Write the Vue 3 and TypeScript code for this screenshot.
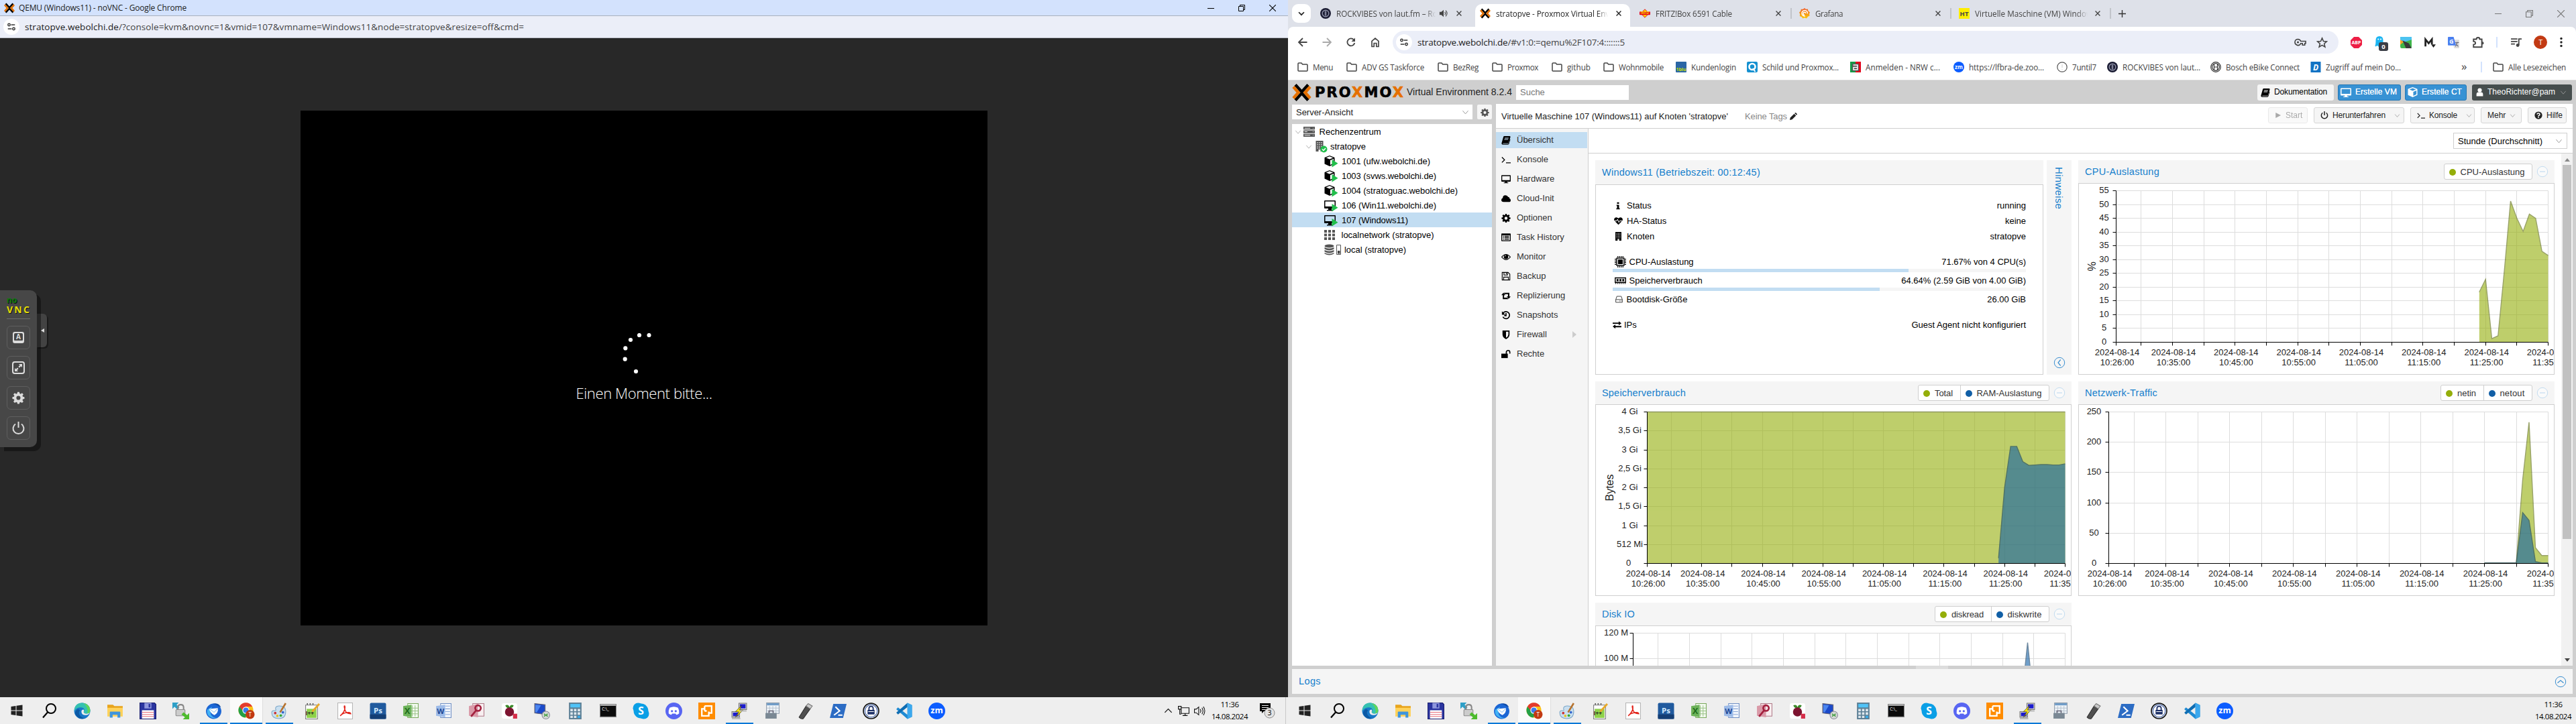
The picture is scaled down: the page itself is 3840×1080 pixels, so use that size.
<script setup lang="ts">
import { h, type FunctionalComponent } from 'vue'

// Spreads the letters of a label so that it fills the given width.
const vFit = {
  mounted(el: HTMLElement, binding: { value: number }) {
    if (!binding.value) return
    const length = (el.textContent ?? '').trim().length
    const natural = el.getBoundingClientRect().width
    el.style.letterSpacing = `${(binding.value - natural) / length}px`
  },
}

const PX = '<g fill="none" stroke-width="4.4"><path stroke="#000" d="M4.5 1.5 14 12l9.5-10.5M4.5 24.500 14 14l9.500 10.500"/><path stroke="#e57000" d="M1.500 4.500 9 13l-7.500 8.500M26.500 4.500 19 13l7.500 8.500"/></g>'
const MONITOR = '<path fill-rule="evenodd" d="M1 1.500h14q1 0 1 1v9q0 1-1 1H9.800v1.500h2V15H4.200v-1h2v-1.500H1q-1 0-1-1v-9q0-1 1-1zm.5 1.500v7h13V3z"/>'
const GEAR = '<path fill-rule="evenodd" d="M6.800 1h2.400l.4 2 1.300.5 1.700-1.200 1.700 1.700L13.100 5.700l.5 1.300 2 .4v2.400l-2 .4-.5 1.300 1.200 1.700-1.700 1.700-1.700-1.200-1.300.5-.4 2H6.800l-.4-2-1.300-.5-1.700 1.200-1.700-1.700 1.200-1.700L2.400 10.200l-2-.4V7.400l2-.4.500-1.300L1.700 4l1.700-1.700 1.700 1.200L6.400 3zM8 5.900a2.600 2.600 0 1 0 0 5.200 2.600 2.600 0 0 0 0-5.200z"/>'
const BUILDING = '<path fill-rule="evenodd" d="M2.500 0h11v16h-4v-3h-3v3h-4zM4.500 2v1.300h1.300V2zm2.800 0v1.300h1.300V2zm2.900 0v1.300h1.300V2zM4.500 4.700V6h1.300V4.700zm2.800 0V6h1.300V4.700zm2.900 0V6h1.300V4.700zM4.500 7.400v1.300h1.300V7.400zm2.800 0v1.300h1.300V7.400zm2.900 0v1.300h1.300V7.400zM4.500 10.100v1.300h1.300v-1.300zm2.800 0v1.300h1.300v-1.300zm2.900 0v1.300h1.300v-1.300z"/>'
const CUBE = '<path d="M8 0 15.500 3v9.500L8 16 .5 12.500V3z"/><path fill="#fff" d="M8 1.300 13.200 3.400 8 5.500 2.800 3.400zM9 7l5-2v6.600L9 14z"/>'
const PLAY = '<path fill="#21bf4b" d="M11.500 6 20.500 11.700 11.500 17.500z"/>'
const BOOK = '<path fill-rule="evenodd" d="M5 1h9.500q1.300.3 1 1.600L13 12q-.5 1.300-2 1.300H3.200q-1 .2-.6.900h9.200l2.600-8 1 .8L13 14.700q-.4.900-1.500.9H2.500Q0 15.300.6 12.500L3.600 2.200Q4 1 5 1zm1 3-.3 1h6.500l.3-1zm-.7 2.300L5 7.300h6.500l.3-1z"/>'
const HELP = '<circle cx="8" cy="8" r="7.500"/><path fill="none" stroke="#fff" stroke-width="2.200" d="M5.300 6.200Q5.600 4 8 4t2.600 2-2.500 3v1"/><circle cx="8" cy="12" r="1.200" fill="#fff"/>'

// [viewBox size, markup]
const art: Record<string, [string, string]> = {
  px: ['0 0 28 26', PX],
  siteinfo: ['0 0 16 16', '<g fill="none" stroke="#333" stroke-width="1.600"><circle cx="4" cy="4.500" r="2"/><path d="M7.500 4.500H14M2 11.500h6.500"/><circle cx="12" cy="11.500" r="2"/></g>'],
  down: ['0 0 16 16', '<path d="M3.500 6 8 10.500 12.500 6" fill="none" stroke="currentColor" stroke-width="2"/>'],
  chev: ['0 0 16 16', '<path d="M2 4.500 8 11.500 14 4.500" fill="none" stroke="currentColor" stroke-width="1.400"/>'],
  close: ['0 0 16 16', '<path d="M2.500 2.500l11 11M13.500 2.500l-11 11" fill="none" stroke="currentColor" stroke-width="2.200"/>'],
  wmin: ['0 0 10 10', '<path d="M0 5.500h10" stroke="currentColor"/>'],
  wmax: ['0 0 10 10', '<path d="M.5 2.500h7v7h-7zM2.500 2.500v-2h7v7h-2" fill="none" stroke="currentColor"/>'],
  wclose: ['0 0 10 10', '<path d="M0 0l10 10M10 0 0 10" fill="none" stroke="currentColor" stroke-width="1.100"/>'],
  plus: ['0 0 12 12', '<path d="M6 0v12M0 6h12" stroke="#333" stroke-width="1.500"/>'],
  speaker: ['0 0 16 16', '<path fill="#444" d="M1 5.500h3L8 2v12L4 10.500H1z"/><path fill="none" stroke="#444" stroke-width="1.300" d="M10 5.500q2 2.500 0 5M11.500 3q4.500 5 0 10"/>'],
  rock: ['0 0 16 16', '<circle cx="8" cy="8" r="8" fill="#1b1c33"/><circle cx="8" cy="8" r="4.800" fill="none" stroke="#8f93a8" stroke-width="1.400"/><path d="M8 4.500v7" stroke="#7d8096" stroke-width="2.500"/>'],
  fritz: ['0 0 18 16', '<path fill="#ffd800" stroke="#e3001b" d="M9 1 16 8 9 15 2 8z"/><rect x="0" y="5" width="18" height="5.500" rx="1" fill="#e3001b"/><text x="9" y="9.600" font-size="5" font-weight="700" text-anchor="middle" fill="#ffe000">FRITZ!</text>'],
  grafana: ['0 0 16 16', '<defs><linearGradient id="gf" x1="0" y1="0" x2="0" y2="1"><stop offset="0" stop-color="#f05a28"/><stop offset="1" stop-color="#fbca0a"/></linearGradient></defs><path fill="url(#gf)" d="M8 0l2 1.800 2.800-.3.700 2.700L16 6.500l-1 2.500.6 2.500-2.600 1.200L11 15.500l-3-1-2.700 1-1.500-2.300L.8 12 1.200 9 0 6.500l2.200-2 .6-2.800 3 .1z"/><path fill="none" stroke="#fff" stroke-width="1.400" d="M12.500 8.300A4.300 4.300 0 1 0 9 12M10 8a2 2 0 1 0-2 2.200"/>'],
  ht: ['0 0 16 16', '<path fill="#ffee00" d="M0 0h16v16H0z"/><text x="8" y="11.500" font-size="9.500" font-weight="700" text-anchor="middle">HT</text>'],
  back: ['0 0 16 16', '<path d="M14.500 8H2.500M8 2 2 8l6 6" fill="none" stroke="currentColor" stroke-width="1.800"/>'],
  fwd: ['0 0 16 16', '<path d="M1.500 8h12M8 2l6 6-6 6" fill="none" stroke="currentColor" stroke-width="1.800"/>'],
  reload: ['0 0 16 16', '<path d="M13.300 9A5.500 5.500 0 1 1 12 4.200" fill="none" stroke="#444" stroke-width="1.800"/><path fill="#444" d="M14 1.500V7H8.500z"/>'],
  home: ['0 0 16 16', '<path d="M3 14.500V6.300l5-4.200 5 4.200v8.200H9.800V9.500H6.200v5z" fill="none" stroke="#444" stroke-width="1.700"/>'],
  key: ['0 0 18 16', '<path d="M5.500 3.500a4.500 4.500 0 1 0 4.200 6.200h2.500v2.500h3.500V9.700H17V6.500H9.700A4.500 4.500 0 0 0 5.500 3.500z" fill="none" stroke="#444" stroke-width="1.600"/><circle cx="5.500" cy="8" r="1.600" fill="#444"/>'],
  star: ['0 0 16 16', '<path d="M8 1.800l1.900 4.300 4.600.4-3.500 3.100 1.100 4.600L8 11.700l-4.100 2.500L5 9.600 1.500 6.500l4.600-.4z" fill="none" stroke="#444" stroke-width="1.500"/>'],
  abp: ['0 0 16 16', '<path fill="#ed1e45" d="M4.700 0h6.600L16 4.700v6.600L11.300 16H4.700L0 11.300V4.700z"/><text x="8" y="10.600" font-size="6.600" font-weight="700" fill="#fff" text-anchor="middle">ABP</text>'],
  ghost: ['0 0 20 22', '<path fill="#1cb5f2" d="M7 0q5.500 0 5.500 6v5q2 1 0 2l-1.500-.5V15L8 14l-2 2-2-2-3 1.500q-1-1 0-3Q1.500 11 1.500 6 1.500 0 7 0z"/><circle cx="5.300" cy="4.500" r="1.100" fill="#fff"/><circle cx="9" cy="4.500" r="1.100" fill="#fff"/><rect x="6" y="9" width="14" height="13" rx="3" fill="#3a3d46"/><text x="13" y="19" font-size="9.500" font-weight="700" fill="#fff" text-anchor="middle">0</text>'],
  route: ['0 0 16 16', '<rect width="16" height="16" rx="2" fill="#3fb54a"/><path fill="#4cc3f0" d="M0 0h16v4L0 9z"/><path fill="#f6a623" d="M0 4 5 7 0 11z"/><path fill="#3a3a3a" d="M3 5 12 9 16 16H8L5 9z"/>'],
  mdl: ['0 0 16 16', '<path d="M1.500 13.500V3.500L6 9l4.500-5.500v7" fill="none" stroke="#222" stroke-width="2.600"/><path fill="#222" d="M9.500 10.500H16L12.700 15z"/>'],
  translate: ['0 0 16 16', '<path fill="#dcdcdc" d="M5 4h10q1 0 1 1v10q0 1-1 1H9z"/><path fill="#4a80f0" d="M1 0h7l3.500 12H1q-1 0-1-1V1q0-1 1-1z"/><text x="5" y="9" font-size="8" font-weight="700" fill="#fff" text-anchor="middle">G</text><path d="M10.500 8h5M13 7v1.500q-.5 3-2.500 5M11.500 9.500l3 4" stroke="#667" fill="none"/>'],
  puzzle: ['0 0 16 16', '<path d="M2 4h3.800a2.200 2.200 0 0 1 4.400 0H13v10.500H2V11q2.500 0 2.500-2T2 7z" fill="none" stroke="#444" stroke-width="1.700"/><path d="M13.500 7a2 2 0 0 1 0 4z" fill="#444"/>'],
  playlist: ['0 0 16 16', '<path d="M1 3h9M1 6.500h9M1 10h5.500M12 11.500V3h4" fill="none" stroke="#444" stroke-width="1.700"/><circle cx="10.500" cy="11.800" r="2.300" fill="#444"/>'],
  dots: ['0 0 4 16', '<circle cx="2" cy="2.500" r="1.700"/><circle cx="2" cy="8" r="1.700"/><circle cx="2" cy="13.500" r="1.700"/>'],
  folder: ['0 0 16 16', '<path d="M1 3q0-1 1-1h4l1.700 2H14q1 0 1 1v8q0 1-1 1H2q-1 0-1-1z" fill="none" stroke="#444" stroke-width="1.500"/>'],
  blu: ['0 0 16 16', '<rect width="16" height="16" rx="1" fill="#2b66a5"/><text x="8" y="14" font-size="7" font-weight="700" fill="#c8e000" text-anchor="middle">1blu</text>'],
  schild: ['0 0 16 16', '<rect width="16" height="16" rx="2" fill="#1590d0"/><circle cx="8" cy="7.500" r="4.500" fill="none" stroke="#fff" stroke-width="2.600"/><path d="M9 10l3.500 5" stroke="#fff" stroke-width="2"/>'],
  nrw: ['0 0 16 16', '<path fill="#159a48" d="M0 0h8v16H0z"/><path fill="#e2001a" d="M8 0h8v16H8z"/><rect x="3" y="3" width="10" height="11" fill="#555"/><path d="M4.500 5H11v3.500H5V12h6.500M11 8.500V12" stroke="#fff" fill="none" stroke-width="1.500"/>'],
  zoom: ['0 0 16 16', '<circle cx="8" cy="8" r="8" fill="#0b5cff"/><text x="8" y="10.600" font-size="8" font-weight="700" fill="#fff" text-anchor="middle">zm</text>'],
  seven: ['0 0 16 16', '<circle cx="8" cy="8" r="7.200" fill="#fff" stroke="#555" stroke-width="1.200"/><path d="M8 4v5M8 11v1" stroke="#ccc"/>'],
  bosch: ['0 0 16 16', '<g fill="none" stroke="#333" stroke-width="1.200"><circle cx="8" cy="8" r="7.300"/><circle cx="8" cy="8" r="5.300"/><path d="M5.500 3.500v9M10.500 3.500v9M5.500 8h5"/></g>'],
  dg: ['0 0 16 16', '<rect x=".5" width="15" height="16" fill="#1273c4"/><text x="8" y="12.500" font-size="12" font-style="italic" font-weight="700" fill="#fff" text-anchor="middle">D</text>'],
  book: ['0 0 16 16', BOOK],
  monitor: ['0 0 16 16', MONITOR],
  gear: ['0 0 16 16', GEAR],
  cube: ['0 0 16 16', '<path fill-rule="evenodd" d="M8 0 15.500 3v9.500L8 16 .5 12.500V3zM8 1.600 2.800 3.700 8 5.800l5.200-2.100zM9 7.500v6.300l5-2.300V5.300z"/>'],
  user: ['0 0 16 16', '<circle cx="8" cy="4.300" r="3.800"/><path d="M2 15.500V12q0-4 4-4h4q4 0 4 4v3.500z"/>'],
  dc: ['0 0 16 16', '<path fill="#555" d="M0 1h16v4H0zM0 6h16v4H0zM0 11h16v4H0z"/><path fill="#eee" d="M1.500 2.500h8v1h-8zM1.500 7.500h4v1h-4zM1.500 12.500h8v1h-8z"/><path fill="#bbb" d="M13 2.500h1.500v1H13zM13 7.500h1.500v1H13zM13 12.500h1.500v1H13z"/>'],
  node: ['0 0 21 18', `<g fill="#555">${BUILDING}</g><circle cx="14.500" cy="12.500" r="5" fill="#21bf4b"/><path d="M12 12.500l2 2 3-3.500" fill="none" stroke="#fff" stroke-width="1.500"/>`],
  ct: ['0 0 21 18', CUBE + PLAY],
  vm: ['0 0 21 18', '<path fill-rule="evenodd" d="M1 1h15q1 0 1 1v10q0 1-1 1h-5v2h2v1.500H4V15h2v-2H1q-1 0-1-1V2q0-1 1-1zm.5 1.500V10h14V2.500z"/>' + PLAY],
  sdn: ['0 0 21 18', '<path fill="#555" d="M0 1h4v4H0zM6 1h4v4H6zM12 1h4v4h-4zM0 6.500h4v4H0zM6 6.500h4v4H6zM12 6.500h4v4h-4zM0 12h4v4H0zM6 12h4v4H6zM12 12h4v4h-4z"/>'],
  storage: ['0 0 26 18', '<g fill="#555"><ellipse cx="7.500" cy="3" rx="7" ry="2.500"/><path d="M.5 5q7 3.500 14 0v2.500q-7 4-14 0zM.5 9q7 3.500 14 0v2.500q-7 4-14 0zM.5 13q7 3.500 14 0v1.500q-7 4-14 0z"/></g><path d="M18.500 1.500h6v14h-6z" fill="#fff" stroke="#555"/><path fill="#444" d="M20 10h3.500v4.500H20z"/>'],
  term: ['0 0 16 16', '<path d="M1 4l4.500 4.500L1 13M8 13.500h8" fill="none" stroke="currentColor" stroke-width="1.500"/>'],
  cloud: ['0 0 16 16', '<path d="M4 14q-4 0-4-3.500Q0 8 2.500 7 2.500 2.500 7 2.500q3.500 0 4.500 3 2.500 0 2.500 2.500 2 .8 2 3Q16 14 13 14z"/>'],
  list: ['0 0 16 16', '<path fill-rule="evenodd" d="M1 1.500h14q1 0 1 1v11q0 1-1 1H1q-1 0-1-1v-11q0-1 1-1zM1.500 4.500v8.500h13V4.500z"/><path d="M3 5.500h1.500V7H3zm2.500 0H13V7H5.500zM3 8h1.500v1.500H3zm2.500 0H13v1.500H5.500zM3 10.500h1.500V12H3zm2.500 0H13V12H5.500z"/>'],
  eye: ['0 0 16 16', '<path d="M.7 8.500Q8-.5 15.300 8.500 8 17.500.7 8.500z" fill="none" stroke="currentColor" stroke-width="1.300"/><circle cx="8" cy="8" r="3.800"/><path d="M6 7.500q.3-1.700 2-2" fill="none" stroke="#fff" stroke-width=".9"/>'],
  floppy: ['0 0 16 16', '<path d="M1.500 1.500h10l3 3v10h-13zM4.500 1.500v4.500h6V1.500M8.500 2.500v2M4 14.500V9.500h8v5" fill="none" stroke="currentColor" stroke-width="1.300"/>'],
  retweet: ['0 0 16 16', '<path d="M0 7 3.500 3 7 7H4.700v4.500H10L12 14H2.500V7zM16 9.500l-3.500 4-3.500-4h2.300V5.300H6L4 3h9.700v6.500z"/>'],
  history: ['0 0 16 16', '<path d="M3 4.800a6 6 0 1 1-.3 6.200M8 4.500v4.500H5" fill="none" stroke="currentColor" stroke-width="1.900"/><path d="M1 1.500v6h6z"/>'],
  shield: ['0 0 16 16', '<path fill-rule="evenodd" d="M2 1h12v7q0 5-6 8-6-3-6-8zm6 2v10.500q4-2.500 4-5.500V3z"/>'],
  unlock: ['0 0 16 16', '<path d="M0 7.500h11V15H0z"/><path d="M8.500 8V5a3 3 0 0 1 6 0v2.500" fill="none" stroke="currentColor" stroke-width="1.900"/>'],
  info: ['0 0 16 16', '<path d="M6 1h4v3H6zM5 6h5v7h1.500v2h-7v-2H6V8H5z"/>'],
  heart: ['0 0 16 16', '<path d="M8 15 1 8Q-1 5 1.500 2.500 5 0 8 3.500q3-3.500 6.500-1Q17 5 15 8z"/><path d="M1 8h4l1.500-3L9 11l1.300-3H15" fill="none" stroke="#fff" stroke-width="1.200"/>'],
  building: ['0 0 16 16', BUILDING],
  cpu: ['0 0 18 18', '<path d="M2.500 2.500h13v13h-13z"/><path d="M4 4h10v10H4z" fill="#fff"/><path d="M5.300 5.300h7.400v7.400H5.300z"/><path d="M5 0v2.500M7.700 0v2.500M10.300 0v2.500M13 0v2.500M5 15.500V18M7.700 15.500V18M10.300 15.500V18M13 15.500V18M0 5h2.500M0 7.700h2.500M0 10.300h2.500M0 13h2.500M15.500 5H18M15.500 7.700H18M15.500 10.300H18M15.500 13H18" stroke="#000" stroke-width="1.300"/>'],
  ram: ['0 0 18 16', '<path fill-rule="evenodd" d="M0 3h18v9H0zm1.500 1.500V10h15V4.500z"/><path d="M3 5.500h3v3.500H3zm4.500 0h3v3.500h-3zm4.500 0h3v3.500h-3z"/><path d="M1.500 12v1.500M4.500 12v1.500M7.500 12v1.500M10.500 12v1.500M13.500 12v1.500M16.500 12v1.500" stroke="#000"/>'],
  hdd: ['0 0 16 16', '<path d="M2 8.500 4 2.500h8l2 6v5H2zM2 8.500h12M8.500 11h1.300M11 11h1.300" fill="none" stroke="#444" stroke-width="1.200"/>'],
  exchange: ['0 0 16 16', '<path d="M0 4h11V1.500L16 5.200 11 9V6.300H0zM16 12.500H5V15L0 11.200 5 7.500v2.700h11z"/>'],
  pencil: ['0 0 16 16', '<path d="M0 16l1-5L9.500 2.500l4 4L5 15zM10.500 1.500 12 0q1 0 2.500 1.500T16 4l-1.500 1.500z"/>'],
  play: ['0 0 16 16', '<path d="M2 1.500 14.500 8 2 14.500z"/>'],
  power: ['0 0 16 16', '<path d="M4.500 3A6.200 6.200 0 1 0 11.500 3M8 0v8" fill="none" stroke="currentColor" stroke-width="2"/>'],
  help: ['0 0 16 16', HELP],
  ringMinus: ['0 0 18 18', '<circle cx="9" cy="9" r="7.700" fill="#fafafa" stroke="#c3dcf0"/><path d="M5 9h8" stroke="#c3dcf0" stroke-width="1.200"/>'],
  ringLeft: ['0 0 18 18', '<circle cx="9" cy="9" r="7.700" fill="none" stroke="#3b8fd0"/><path d="M10.700 4.500 7 9l3.700 4.500" fill="none" stroke="#3b8fd0" stroke-width="1.200"/>'],
  ringUp: ['0 0 18 18', '<circle cx="9" cy="9" r="7.700" fill="none" stroke="#3b8fd0"/><path d="M4.500 10.700 9 7l4.500 3.700" fill="none" stroke="#3b8fd0" stroke-width="1.200"/>'],
  // noVNC control bar
  nKeys: ['0 0 25 25', '<path fill-rule="evenodd" d="M7 4h11q3 0 3 3v11q0 3-3 3H7q-3 0-3-3V7q0-3 3-3zm1 2q-2 0-2 2v8q0 1 1 1h11q1 0 1-1V8q0-2-2-2z"/><text x="12.500" y="15.300" font-size="10" font-weight="700" text-anchor="middle">A</text>'],
  nFull: ['0 0 25 25', '<rect x="4" y="4" width="17" height="17" rx="3" fill="none" stroke="currentColor" stroke-width="2"/><path d="M13 7H18v5l-1.700-1.700-2.300 2.300-1.600-1.600 2.300-2.300zM12 18H7v-5l1.700 1.700 2.300-2.300 1.600 1.600-2.300 2.300z"/>'],
  nGear: ['0 0 25 25', `<g transform="translate(3 2.500) scale(1.180)">${GEAR}</g>`],
  nPower: ['0 0 25 25', '<path d="M8 6.500A8 8 0 1 0 17 6.500M12.500 3v9" fill="none" stroke="currentColor" stroke-width="2"/>'],
  // Taskbar
  start: ['0 0 24 24', '<path d="M3.500 6 10.500 5v6.500h-7zM11.500 4.800 20.500 3.500v8h-9zM3.500 12.500h7V19l-7-1zM11.500 12.500h9v8l-9-1.300z"/>'],
  search: ['0 0 24 24', '<circle cx="14" cy="9" r="7" fill="none" stroke="#000" stroke-width="2"/><path d="M9 14.500 2 22.500" stroke="#000" stroke-width="2.200"/>'],
  edge: ['0 0 24 24', '<circle cx="12" cy="12" r="11.500" fill="#1878c8"/><path fill="#35c1b1" d="M.8 10Q2 .5 12 .5T23.500 11q0 5-5.500 5-4 0-4-2.500 2-1.500 1-4T10 7Q4 7 .8 12z"/><path fill="#5fd65a" d="M14 1q9 2 9.400 10 0 4-4 5 2-9-5.400-15z"/><path fill="#0c59a4" d="M9 11q-3 3-.5 7t7.500 4.500Q9 25 4 19.500T6 9z"/><path fill="#eee" d="M14 13.500q.5 2.500 4 2.500t5-1.500q-1.500 3.500-6 3.500-5.500 0-6-4t3-4q1.500 1.500 0 3.500z"/>'],
  explorer: ['0 0 24 24', '<path fill="#e8a41c" d="M1 3h8l2 2h12v4H1z"/><path fill="#ffd25a" d="M1 7.500h22V20H1z"/><path fill="#3f95dc" d="M4.500 21.500V14q0-1 1-1h13q1 0 1 1v7.500h-4v-4h-7v4z"/>'],
  save: ['0 0 24 24', '<path fill="#2b35a0" stroke="#1a2070" d="M.5 .5h21l2 2v21H.5z"/><path fill="#8f97dd" d="M7 .5h10v8H7z"/><path fill="#2b35a0" d="M13 2h2.500v5H13z"/><path fill="#fff" d="M3.500 11h17v12h-17z"/><path d="M3.500 14h17M3.500 17h17M3.500 20h17" stroke="#e56c7a"/>'],
  winscp: ['0 0 24 24', '<path fill="#2d9fc7" d="M0 0h9L6 3l4 4-3 3-4-4-3 3z"/><path fill="none" stroke="#888" stroke-width="2" d="M8 11V7q0-4 4-4t4 4v4"/><rect x="5" y="10" width="13" height="9" rx="1" fill="#ccc" stroke="#888"/><path fill="#4dbb2d" d="M24 24h-9l3-3-5-4 3-3 5 4 3-3z"/>'],
  tbird: ['0 0 24 24', '<circle cx="12" cy="12.500" r="11" fill="#1c66d4"/><path fill="#42b2f5" d="M3 10Q1 16 6 20t12 2q-8 0-10-5t2-11z"/><path fill="#fff" d="M5.500 9 18 8q1 7-5 10-6-3-7.500-9z"/><path d="M6 9l6.500 5L18 8.500" fill="none" stroke="#9cc8f0"/><path fill="#0d4aa8" d="M10 2q9-3 12.500 5l-4-2q-5-3-8.500-3z"/>'],
  chrome: ['0 0 26 26', '<circle cx="12" cy="12" r="11.500" fill="#fbc116"/><path fill="#e33b2e" d="M2 6.200a11.500 11.500 0 0 1 20 0H12L7.500 14z"/><path fill="#23a047" d="M2 6.200a11.500 11.500 0 0 0 9 17.200L16 15h-7z"/><circle cx="12" cy="12" r="5.400" fill="#fff"/><circle cx="12" cy="12" r="4.200" fill="#3b7ded"/><circle cx="18.500" cy="18.500" r="7" fill="#c23a13"/><text x="18.500" y="21.500" font-size="8.500" fill="#fff" text-anchor="middle">T</text>'],
  paint: ['0 0 24 24', '<path fill="#c9dff0" stroke="#7ca7c8" d="M10 5q11-1 11 8 0 10-10 10Q1 23 1 14.500q0-3 3-3t3-1Q5 6 10 5z"/><circle cx="6" cy="15" r="1.800" fill="#c33"/><circle cx="9" cy="19" r="1.800" fill="#e9c21d"/><circle cx="14" cy="18.500" r="1.800" fill="#3a3"/><circle cx="17" cy="14" r="1.800" fill="#36c"/><path d="M21 1 13 14" stroke="#b5722e" stroke-width="2.500"/>'],
  npp: ['0 0 24 24', '<path fill="#fff" stroke="#777" d="M2.500 3.500h17v20h-17z"/><path fill="#8fd14a" d="M4 9h14v13H4z"/><path d="M5 3V1M9 3V1M13 3V1" stroke="#555" stroke-width="1.500"/><text x="8.500" y="18" font-size="8" font-weight="700" text-anchor="middle">I++</text><path d="M22 2 12 13" stroke="#e8a92a" stroke-width="2.800"/>'],
  pdf: ['0 0 24 24', '<path fill="#fff" stroke="#b5b5b5" d="M1.500 .5h21v23h-21z"/><path fill="none" stroke="#e2231a" stroke-width="1.500" d="M5 19Q13 12 11.500 5q-1.500-1 0 5t8.500 6q0-2.500-6-1.500T5 19z"/>'],
  ps: ['0 0 24 24', '<rect x=".5" y=".5" width="23" height="23" rx="2" fill="#205a9e"/><path fill="#143e74" d="M.5 17h23v6.500H.5z"/><text x="12" y="15" font-size="11" font-weight="700" fill="#d4ecff" text-anchor="middle">Ps</text>'],
  excel: ['0 0 24 24', '<path fill="#f3faf0" stroke="#78a85a" d="M7.500 1.500h15v20h-15z"/><path d="M14 4v16M18 4v16M12 8h10M12 12h10M12 16h10" stroke="#9bc388"/><path fill="#6db35a" d="M1 5 13 3v18L1 19z"/><text x="7" y="16.500" font-size="12" font-weight="700" fill="#1f6b1c" text-anchor="middle">X</text>'],
  word: ['0 0 24 24', '<path fill="#f2f6fc" stroke="#6f8fc4" d="M7.500 1.500h15v20h-15z"/><path d="M14 5h7M14 9h7M14 13h7M14 17h7" stroke="#8aa7d6"/><path fill="#9dbbe8" d="M1 5 14 3v18L1 19z"/><text x="7.500" y="16.500" font-size="11" font-weight="700" fill="#1d4795" text-anchor="middle">W</text>'],
  access: ['0 0 24 24', '<path fill="#f8eef0" stroke="#b07a88" d="M6.500 1.500h16v18h-16z"/><path fill="#d99aa8" d="M1 5 14 2v19L1 19z"/><circle cx="14" cy="8" r="4" fill="none" stroke="#a3213f" stroke-width="2.600"/><path d="M11.500 11 4 20" stroke="#a3213f" stroke-width="2.600"/>'],
  raspi: ['0 0 24 24', '<rect x="1" y="1" width="22" height="22" rx="3" fill="#fff"/><path fill="#3b8a2a" d="M6 4q5-2 6 3 1-5 6-3-1 4-6 4T6 4z"/><circle cx="12" cy="13.500" r="6.500" fill="#7d1330"/><path fill="#d52d49" d="M17 16h6v7h-6z"/>'],
  rdp: ['0 0 24 24', '<path fill="#1b49c9" stroke="#667" d="M1 1.500 16 3v14L1 15z"/><path fill="#4c86f0" d="M2 3l8 1-6 10H2z"/><circle cx="17" cy="18" r="5.500" fill="#d5d9d5" stroke="#889"/><path d="M14.500 16l2 2-2 2M19.500 16l-2 2 2 2" fill="none" stroke="#3a9a3a" stroke-width="1.400"/>'],
  calc: ['0 0 24 24', '<path fill="#5d8096" d="M3 0h18v24H3z"/><path fill="#4fc3f7" d="M5 2h14v5H5z"/><path fill="#dfe8ee" d="M5 9h3.500v3.500H5zM10.200 9h3.500v3.500h-3.500zM15.500 9H19v3.500h-3.500zM5 14h3.500v3.500H5zM10.200 14h3.500v3.500h-3.500zM15.500 14H19v3.500h-3.500zM5 19h3.500v3H5zM10.200 19h3.500v3h-3.500z"/><path fill="#37b0f0" d="M15.500 19H19v3h-3.500z"/>'],
  cmd: ['0 0 24 24', '<path fill="#0b0b0b" stroke="#888" d="M.5 2.500h23v18H.5z"/><path fill="#ddd" d="M1 3h22v1.500H1z"/><text x="3" y="11.500" font-size="6" fill="#fff">C:\\_</text>'],
  skype: ['0 0 24 24', '<circle cx="8" cy="8" r="7.500" fill="#0a9fe6"/><circle cx="16" cy="16" r="7.500" fill="#0a9fe6"/><circle cx="12" cy="12" r="10.500" fill="#0a9fe6"/><text x="12" y="17.500" font-size="15" font-weight="700" fill="#fff" text-anchor="middle">S</text>'],
  discord: ['0 0 24 24', '<circle cx="12" cy="12" r="12" fill="#5865f2"/><path fill="#fff" d="M6 7.500q3-1.500 6-1.500t6 1.500q2 4 1.500 8-2 2-4 2l-1-1.700H9.500l-1 1.700q-2 0-4-2Q4 11.500 6 7.500z"/><circle cx="9.300" cy="12.300" r="1.600" fill="#5865f2"/><circle cx="14.700" cy="12.300" r="1.600" fill="#5865f2"/>'],
  vmware: ['0 0 24 24', '<path fill="#ff8c00" d="M0 0h24v24H0z"/><path d="M9 5h10v10h-4M15 13v6H5V9h4v3M9 9V5M9 12h3" fill="none" stroke="#fff" stroke-width="2.200"/>'],
  putty: ['0 0 24 24', '<path fill="#cfcfcf" stroke="#777" d="M11 1h11v9H11zM1 13h11v8H1z"/><path fill="#1b1bd0" d="M12.500 2.500h8v6h-8zM2.500 14.500h8v5h-8z"/><path fill="#ffe800" stroke="#333" stroke-width=".7" d="M15 4 6 13l5 .5L6 21l11-10-5-.5z"/><path fill="#bbb" d="M12 11h10v2H12zM1 21.500h12V24H1z"/>'],
  tools: ['0 0 24 24', '<path fill="#eef3f8" stroke="#8a98a8" d="M3.500 .5h18v15h-18z"/><path fill="#6f9cc8" d="M4 1h17v3H4z"/><path d="M8 5v10M12.500 5v10M17 5v10M4 8h17M4 12h17" stroke="#b8c4d0"/><path fill="#7a8894" d="M2 15h16v8H2z"/><path fill="none" stroke="#667" stroke-width="1.500" d="M7 15v-3h6v3"/>'],
  usb: ['0 0 24 24', '<path fill="#4f4f4f" stroke="#2f2f2f" d="M13 5 19 9 9 23q-3 1-6-2z"/><path fill="#c9c9c9" stroke="#777" d="M16 1.500 22 5l-3 4-6-4z"/>'],
  pshell: ['0 0 24 24', '<path fill="#2c6cc4" d="M5 2h19l-5 20H0z"/><path d="M8 6l6 6-8 6M12 18h6" fill="none" stroke="#fff" stroke-width="2"/>'],
  keepass: ['0 0 24 24', '<circle cx="12" cy="12" r="11" fill="#dfe6f2" stroke="#111" stroke-width="1.600"/><circle cx="12" cy="12" r="8.800" fill="#fff" stroke="#3b5aa0"/><path d="M9 11V8.500a3 3 0 0 1 6 0V11" fill="none" stroke="#1c2f66" stroke-width="1.700"/><path fill="#1c2f66" d="M7 10.500h10V17H7z"/><path d="M8 13h8" stroke="#fff"/>'],
  vscode: ['0 0 24 24', '<path fill="#1f8ad2" d="M17 .5 23.500 3.500v17L17 23.500 1 9.500 3.500 7 17 17.500z"/><path fill="#0e6db3" d="M17 .5v6L3.500 17 1 14.500z"/><path fill="#3ba8ee" d="M17 .5 23.500 3.500v17L17 23.500z"/>'],
  zoomBig: ['0 0 24 24', '<circle cx="12" cy="12" r="12" fill="#0b5cff"/><text x="12" y="15.800" font-size="12" font-weight="700" fill="#fff" text-anchor="middle">zm</text>'],
  caret: ['0 0 16 16', '<path d="M2.500 10.500 8 5l5.500 5.500" fill="none" stroke="#111" stroke-width="1.300"/>'],
  net: ['0 0 16 16', '<path d="M4.500 3.500h11v8h-11zM10 11.500v3M6.500 14.500h7M.5 1.500h4v4h-4zM2.500 5.500v7h2" fill="none" stroke="#111" stroke-width="1.100"/>'],
  vol: ['0 0 16 16', '<path d="M.5 5.500h2.500L6.500 2.500v11L3 10.500H.5zM8.500 5.500q2 2.500 0 5M11 3.500q3 4.500 0 9M13 2q4 6 0 12" fill="none" stroke="#111"/>'],
  notif: ['0 0 26 26', '<path d="M2 2h16v12H8l-3 3v-3H2z"/><path d="M5 5.500h10M5 8.500h10M5 11.500h6" stroke="#eee" stroke-width="1.200"/><circle cx="16.500" cy="16.500" r="7.500" fill="#e3e3e3" stroke="#888"/><text x="16.500" y="20.300" font-size="10.500" text-anchor="middle">3</text>'],
}

const Ico: FunctionalComponent<{ n: string; w?: number; hgt?: number }> = (props) => {
  const [box, markup] = art[props.n]
  return h('svg', {
    viewBox: box,
    width: props.w ?? 16,
    height: props.hgt ?? props.w ?? 16,
    fill: 'currentColor',
    style: { flex: 'none', display: 'block' },
    innerHTML: markup,
  })
}
Ico.props = ['n', 'w', 'hgt']

const tabs = [
  { icon: 'rock', text: 'ROCKVIBES von laut.fm – Roc', max: 148, fit: 156, audio: true },
  { icon: 'px', text: 'stratopve - Proxmox Virtual Envi', max: 167, fit: 172, active: true },
  { icon: 'fritz', text: 'FRITZ!Box 6591 Cable', max: 170, fit: 114, sep: true },
  { icon: 'grafana', text: 'Grafana', max: 170, fit: 41, sep: true },
  { icon: 'ht', text: 'Virtuelle Maschine (VM) Window', max: 168, fit: 175, sep: true },
]

const bookmarks = [
  { icon: 'folder', text: 'Menu', fit: 30, at: 14 },
  { icon: 'folder', text: 'ADV GS Taskforce', fit: 93, at: 87 },
  { icon: 'folder', text: 'BezReg', fit: 38, at: 223 },
  { icon: 'folder', text: 'Proxmox', fit: 46, at: 304 },
  { icon: 'folder', text: 'github', fit: 35, at: 393 },
  { icon: 'folder', text: 'Wohnmobile', fit: 67, at: 470 },
  { icon: 'blu', text: 'Kundenlogin', fit: 67, at: 578 },
  { icon: 'schild', text: 'Schild und Proxmox...', fit: 114, at: 684 },
  { icon: 'nrw', text: 'Anmelden - NRW c...', fit: 111, at: 838 },
  { icon: 'zoom', text: 'https://lfbra-de.zoo...', fit: 112, at: 992 },
  { icon: 'seven', text: '7until7', fit: 36, at: 1146 },
  { icon: 'rock', text: 'ROCKVIBES von laut...', fit: 116, at: 1221 },
  { icon: 'bosch', text: 'Bosch eBike Connect', fit: 110, at: 1375 },
  { icon: 'dg', text: 'Zugriff auf mein Do...', fit: 112, at: 1524 },
].map((b, i, all) => ({ ...b, width: (all[i + 1]?.at ?? 1749) - b.at }))

const tree = [
  { icon: 'dc', text: 'Rechenzentrum', fit: 92, pad: 4, open: true, w: 17, box: 24 },
  { icon: 'node', text: 'stratopve', fit: 53, pad: 20, open: true, w: 21, box: 24.500 },
  { icon: 'ct', text: '1001 (ufw.webolchi.de)', fit: 132, pad: 48, w: 21, box: 26 },
  { icon: 'ct', text: '1003 (svws.webolchi.de)', fit: 141, pad: 48, w: 21, box: 26 },
  { icon: 'ct', text: '1004 (stratoguac.webolchi.de)', fit: 173, pad: 48, w: 21, box: 26 },
  { icon: 'vm', text: '106 (Win11.webolchi.de)', fit: 141, pad: 48, w: 21, box: 26 },
  { icon: 'vm', text: '107 (Windows11)', fit: 99, pad: 48, w: 21, box: 26, sel: true },
  { icon: 'sdn', text: 'localnetwork (stratopve)', fit: 138, pad: 48, w: 21, box: 25.500 },
  { icon: 'storage', text: 'local (stratopve)', fit: 92, pad: 48, w: 26, box: 30 },
]

const nav = [
  ['book', 'Übersicht'], ['term', 'Konsole'], ['monitor', 'Hardware'], ['cloud', 'Cloud-Init'],
  ['gear', 'Optionen'], ['list', 'Task History'], ['eye', 'Monitor'], ['floppy', 'Backup'],
  ['retweet', 'Replizierung'], ['history', 'Snapshots'], ['shield', 'Firewall'], ['unlock', 'Rechte'],
]

const appIcons = [
  'edge', 'explorer', 'save', 'winscp', 'tbird', 'chrome', 'paint', 'npp', 'pdf', 'ps', 'excel', 'word', 'access',
  'raspi', 'rdp', 'calc', 'cmd', 'skype', 'discord', 'vmware', 'putty', 'tools', 'usb', 'pshell', 'keepass', 'vscode', 'zoomBig',
]
const running = ['tbird', 'chrome', 'paint', 'putty']

interface Series { name: string; color: string; line: string; from: number; values: number[]; fit: number }
interface Chart {
  title: string; fit: number; left: number; max: number; labels: string[]; labelX: number
  axis?: string; axisX?: number; series: Series[]
}
const GREEN = { color: '#94ae0a', line: '#566606' }
const BLUE = { color: '#115fa6', line: '#0a3861' }

const charts: Record<string, Chart> = {
  cpu: {
    title: 'CPU-Auslastung', fit: 111, left: 55.5, max: 55, labelX: 37.500, axis: '%', axisX: 20,
    labels: ['0', '5', '10', '15', '20', '25', '30', '35', '40', '45', '50', '55'],
    series: [{ name: 'CPU-Auslastung', fit: 96, ...GREEN, from: 58, values: [18.2, 22.8, 1.3, 2.3, 26, 51.2, 45, 40.2, 46.5, 45, 33, 31.5] }],
  },
  mem: {
    title: 'Speicherverbrauch', fit: 125, left: 76.5, max: 4, labelX: 50.500, axis: 'Bytes', axisX: 21,
    labels: ['0', '512 Mi', '1 Gi', '1,5 Gi', '2 Gi', '2,5 Gi', '3 Gi', '3,5 Gi', '4 Gi'],
    series: [
      { name: 'Total', fit: 27, ...GREEN, from: 0, values: Array(70).fill(4) },
      { name: 'RAM-Auslastung', fit: 97, ...BLUE, from: 58, values: [0.14, 2, 3.09, 3.09, 2.69, 2.59, 2.6, 2.61, 2.61, 2.6, 2.6, 2.63] },
    ],
  },
  net: {
    title: 'Netzwerk-Traffic', fit: 108, left: 44.5, max: 250, labelX: 22.500,
    labels: ['0', '50', '100', '150', '200', '250'],
    series: [
      { name: 'netin', fit: 28, ...GREEN, from: 59, values: [1, 1, 1, 1, 1, 1, 138, 233, 26, 13, 13] },
      { name: 'netout', fit: 37, ...BLUE, from: 59, values: [1, 1, 1, 1, 1, 1, 84, 71, 3, 1, 1] },
    ],
  },
  disk: {
    title: 'Disk IO', fit: 49, left: 55.5, max: 120, labelX: 30,
    labels: ['0', '20 M', '40 M', '60 M', '80 M', '100 M', '120 M'],
    series: [
      { name: 'diskread', fit: 48, ...GREEN, from: 58, values: [1, 1, 1, 1, 20, 62, 12, 2, 1, 1, 1, 1] },
      { name: 'diskwrite', fit: 51, ...BLUE, from: 58, values: [1, 1, 1, 1, 65, 112.500, 65, 2, 1, 1, 1, 1] },
    ],
  },
}

const RIGHT = 699.5
const TOP = 10.5
const BOTTOM = 236.5
const ticks = [0, 4, 9, 14, 19, 24, 29, 34, 39, 44, 49, 54, 59, 64, 69]
const stamps: Record<number, string> = {
  0: '10:26:00', 9: '10:35:00', 19: '10:45:00', 29: '10:55:00', 39: '11:05:00', 49: '11:15:00', 59: '11:25:00', 69: '11:35:00',
}
const snap = (v: number) => Math.floor(v) + 0.5
const px = (c: Chart, minute: number) => c.left + (minute / 69) * (RIGHT - c.left)
const py = (c: Chart, v: number) => BOTTOM - (v / c.max) * (BOTTOM - TOP)
const gridY = (c: Chart, i: number) => snap(BOTTOM - (i / (c.labels.length - 1)) * (BOTTOM - TOP))
const line = (c: Chart, s: Series) => s.values.map((v, i) => `${px(c, s.from + i).toFixed(1)},${py(c, v).toFixed(1)}`).join(' ')
const area = (c: Chart, s: Series) =>
  `${px(c, s.from)},${BOTTOM} ${line(c, s)} ${px(c, s.from + s.values.length - 1)},${BOTTOM}`

const leftUrl = '/?console=kvm&novnc=1&vmid=107&vmname=Windows11&node=stratopve&resize=off&cmd='
</script>

<template>
  <div class="desktop">
    <!-- Left monitor: noVNC popup -->
    <section class="screen">
      <div class="popup-title">
        <Ico n="px" :w="16" :hgt="16" />
        <span v-fit="250" class="t">QEMU (Windows11) - noVNC - Google Chrome</span>
        <div class="wctl"><Ico n="wmin" :w="10" /><Ico n="wmax" :w="10" /><Ico n="wclose" :w="10" /></div>
      </div>
      <div class="popup-url">
        <span class="info"><Ico n="siteinfo" :w="14" /></span>
        <span v-fit="744" class="t"><b>stratopve.webolchi.de</b>{{ leftUrl }}</span>
      </div>
      <div class="vnc">
        <div class="vm">
          <svg class="spin" width="44" height="62" viewBox="928 497 44 62" fill="#fff">
            <circle cx="967.500" cy="500" r="3.100" /><circle cx="953" cy="500" r="3.100" /><circle cx="940" cy="507" r="3.100" />
            <circle cx="932.300" cy="519.400" r="3.100" /><circle cx="931.700" cy="535.700" r="3.100" /><circle cx="948" cy="554" r="3.100" />
          </svg>
          <span v-fit="203" class="wait">Einen Moment bitte...</span>
        </div>
        <div class="handle"><i></i></div>
        <div class="bar">
          <div class="logo"><span class="no">no</span><span v-fit="36" class="vn">VNC</span></div>
          <hr />
          <div v-for="n in ['nKeys', 'nFull', 'nGear', 'nPower']" :key="n" class="btn"><Ico :n="n" :w="25" /></div>
        </div>
      </div>
      <div class="taskbar">
        <div class="cell"><Ico n="start" :w="24" /></div>
        <div class="cell"><Ico n="search" :w="24" /></div>
        <div v-for="a in appIcons" :key="a" class="cell" :class="{ run: running.includes(a), on: a === 'chrome' }"><Ico :n="a" :w="25" /></div>
        <div class="tray">
          <Ico n="caret" :w="15" /><Ico n="net" :w="17" /><Ico n="vol" :w="17" />
          <div class="clock"><span v-fit="27">11:36</span><span v-fit="54">14.08.2024</span></div>
          <Ico n="notif" :w="26" />
        </div>
      </div>
    </section>

    <!-- Right monitor: Proxmox in Chrome -->
    <section class="screen">
      <div class="tabstrip">
        <span class="tabsearch"><Ico n="down" :w="14" /></span>
        <div v-for="t in tabs" :key="t.text" class="tab" :class="{ active: t.active, sep: t.sep }">
          <Ico :n="t.icon" :w="16" />
          <span class="tt" :style="{ width: t.max + 'px' }"><span v-fit="t.fit">{{ t.text }}</span></span>
          <Ico v-if="t.audio" n="speaker" :w="14" class="aud" />
          <Ico n="close" :w="10" class="x" />
        </div>
        <Ico n="plus" :w="11" class="new" />
        <div class="wctl dim"><Ico n="wmin" :w="10" /><Ico n="wmax" :w="11" /><Ico n="wclose" :w="11" /></div>
      </div>
      <div class="toolbar">
        <div class="navs"><Ico n="back" :w="16" /><Ico n="fwd" :w="16" class="off" /><Ico n="reload" :w="16" /><Ico n="home" :w="16" /></div>
        <div class="omni">
          <span class="info"><Ico n="siteinfo" :w="14" /></span>
          <span v-fit="309" class="t"><b>stratopve.webolchi.de</b>/#v1:0:=qemu%2F107:4:::::::5</span>
          <Ico n="key" :w="18" :hgt="16" class="key" /><Ico n="star" :w="17" />
        </div>
        <div class="exts">
          <Ico n="abp" :w="17" /><Ico n="ghost" :w="20" :hgt="22" class="gh" /><Ico n="route" :w="17" /><Ico n="mdl" :w="17" />
          <Ico n="translate" :w="17" /><Ico n="puzzle" :w="18" /><i></i><Ico n="playlist" :w="17" />
          <span class="av">T</span><Ico n="dots" :w="4" :hgt="16" />
        </div>
      </div>
      <div class="bookmarks">
        <div v-for="b in bookmarks" :key="b.text" class="bm" :style="{ width: b.width + 'px' }">
          <Ico :n="b.icon" :w="16" /><span v-fit="b.fit">{{ b.text }}</span>
        </div>
        <span class="more">»</span><i class="bsep"></i>
        <div class="bm all"><Ico n="folder" :w="16" /><span v-fit="86">Alle Lesezeichen</span></div>
      </div>

      <div class="pve">
        <header class="ph">
          <Ico n="px" :w="29" :hgt="26" />
          <span v-fit="134" class="word">PRO<em>X</em>MO<em>X</em></span>
          <span v-fit="157" class="ver">Virtual Environment 8.2.4</span>
          <span class="find">Suche</span>
          <div class="pbtns">
            <span class="pb" style="width: 114px"><Ico n="book" :w="14" /><span v-fit="79">Dokumentation</span></span>
            <span class="pb blue" style="width: 94px"><Ico n="monitor" :w="16" /><span v-fit="62">Erstelle VM</span></span>
            <span class="pb blue" style="width: 92px"><Ico n="cube" :w="15" /><span v-fit="60">Erstelle CT</span></span>
            <span class="pb dark" style="width: 149px"><Ico n="user" :w="13" /><span v-fit="101">TheoRichter@pam</span><Ico n="chev" :w="10" class="c" /></span>
          </div>
        </header>
        <div class="work">
          <aside class="west">
            <div class="viewrow">
              <div class="combo"><span v-fit="85">Server-Ansicht</span><Ico n="chev" :w="11" /></div>
              <span class="gearb"><Ico n="gear" :w="13" /></span>
            </div>
            <div class="tree">
              <div v-for="r in tree" :key="r.text" class="row" :class="{ sel: r.sel }" :style="{ paddingLeft: r.pad + 'px' }">
                <Ico v-if="r.open" n="chev" :w="10" class="tw" />
                <span class="ib" :style="{ width: r.box + 'px' }"><Ico :n="r.icon" :w="r.w" :hgt="r.icon === 'dc' ? 17 : 18" /></span>
                <span v-fit="r.fit">{{ r.text }}</span>
              </div>
            </div>
          </aside>
          <main class="center">
            <div class="vmhead">
              <span v-fit="338">Virtuelle Maschine 107 (Windows11) auf Knoten 'stratopve'</span>
              <span v-fit="63" class="tags">Keine Tags</span><Ico n="pencil" :w="11" />
              <div class="acts">
                <span class="ab off" style="width: 59px"><Ico n="play" :w="10" /><span>Start</span></span>
                <span class="ab" style="width: 135px"><Ico n="power" :w="12" /><span v-fit="79">Herunterfahren</span><i></i><Ico n="chev" :w="9" class="c" /></span>
                <span class="ab" style="width: 96px"><Ico n="term" :w="12" /><span v-fit="42">Konsole</span><i></i><Ico n="chev" :w="9" class="c" /></span>
                <span class="ab" style="width: 61px"><span>Mehr</span><Ico n="chev" :w="9" class="c" /></span>
                <span class="ab" style="width: 58px"><Ico n="help" :w="12" /><span>Hilfe</span></span>
              </div>
            </div>
            <div class="body">
              <nav class="side">
                <div v-for="([icon, text], i) in nav" :key="text" class="ni" :class="{ sel: i === 0 }">
                  <Ico :n="icon" :w="14" /><span>{{ text }}</span><i v-if="text === 'Firewall'"></i>
                </div>
              </nav>
              <div class="panel">
                <div class="range"><div class="combo2"><span v-fit="126">Stunde (Durchschnitt)</span><Ico n="chev" :w="11" /></div></div>
                <div class="scroll">
                  <div class="cards">
                    <div class="pair">
                      <div class="card status">
                        <div class="ch"><span v-fit="236" class="ct">Windows11 (Betriebszeit: 00:12:45)</span></div>
                        <div class="cb">
                          <div class="sr"><Ico n="info" :w="12" /><span>Status</span><b>running</b></div>
                          <div class="sr"><Ico n="heart" :w="13" /><span>HA-Status</span><b>keine</b></div>
                          <div class="sr"><Ico n="building" :w="13" /><span>Knoten</span><b>stratopve</b></div>
                          <div class="sr gap wide"><Ico n="cpu" :w="17" /><span>CPU-Auslastung</span><b>71.67% von 4 CPU(s)</b></div>
                          <div class="meter"><i :style="{ width: 71.67 + '%' }"></i></div>
                          <div class="sr wide"><Ico n="ram" :w="17" :hgt="15" /><span>Speicherverbrauch</span><b>64.64% (2.59 GiB von 4.00 GiB)</b></div>
                          <div class="meter"><i :style="{ width: 64.64 + '%' }"></i></div>
                          <div class="sr wide"><Ico n="hdd" :w="13" /><span>Bootdisk-Größe</span><b>26.00 GiB</b></div>
                          <div class="sr gap ips"><Ico n="exchange" :w="13" /><span>IPs</span><b>Guest Agent nicht konfiguriert</b></div>
                        </div>
                      </div>
                      <div class="notes"><span>Hinweise</span><Ico n="ringLeft" :w="18" /></div>
                    </div>
                    <div v-for="(c, key) in charts" :key="key" class="card">
                      <div class="ch">
                        <span v-fit="c.fit" class="ct">{{ c.title }}</span>
                        <div class="legend">
                          <span v-for="s in c.series" :key="s.name"><i :style="{ background: s.color }"></i><em v-fit="s.fit">{{ s.name }}</em></span>
                        </div>
                        <Ico n="ringMinus" :w="18" />
                      </div>
                      <div class="cb">
                        <svg width="708" height="284" viewBox="0 0 708 284" class="chart">
                          <g stroke="#ddd" fill="none">
                            <path v-for="(l, i) in c.labels" :key="'h' + l" :d="`M${c.left} ${gridY(c, i)}H${RIGHT}`" />
                            <path v-for="m in ticks" :key="m" :d="`M${snap(px(c, m))} ${TOP}V${BOTTOM}`" />
                          </g>
                          <g v-for="s in c.series" :key="s.name" opacity=".6">
                            <polygon :points="area(c, s)" :fill="s.color" />
                            <polyline :points="line(c, s)" fill="none" :stroke="s.line" stroke-width="1.400" />
                          </g>
                          <g stroke="#000" fill="none">
                            <path :d="`M${c.left} ${TOP}V${BOTTOM}H${RIGHT}`" />
                            <path v-for="(l, i) in c.labels" :key="'t' + l" :d="`M${c.left - 5} ${gridY(c, i)}h5`" />
                            <path v-for="m in ticks" :key="m" :d="`M${snap(px(c, m))} ${BOTTOM}v5`" />
                          </g>
                          <g class="lab" text-anchor="middle">
                            <text v-for="(l, i) in c.labels" :key="l" :x="c.labelX - (l === '0' && key === 'mem' ? 2 : 0)" :y="gridY(c, i) + 3.500">{{ l }}</text>
                            <template v-for="(s, m) in stamps" :key="m">
                              <text :x="px(c, +m) + 1.500" y="256">2024-08-14</text>
                              <text :x="px(c, +m) + 1.500" y="271">{{ s }}</text>
                            </template>
                            <text v-if="c.axis" class="ax" :transform="`translate(${(c.axisX ?? 0) + 5} 123.500) rotate(-90)`">{{ c.axis }}</text>
                          </g>
                        </svg>
                      </div>
                    </div>
                  </div>
                  <div class="sbar"><i class="up"></i><i class="thumb"></i><i class="dn"></i></div>
                </div>
              </div>
            </div>
          </main>
        </div>
        <div class="split"><i></i></div>
        <footer class="logs"><span v-fit="33">Logs</span><Ico n="ringUp" :w="18" /></footer>
      </div>

      <div class="taskbar">
        <div class="cell"><Ico n="start" :w="24" /></div>
        <div class="cell"><Ico n="search" :w="24" /></div>
        <div v-for="a in appIcons" :key="a" class="cell" :class="{ run: running.includes(a), on: a === 'chrome' }"><Ico :n="a" :w="25" /></div>
        <div class="tray second"><div class="clock"><span v-fit="27">11:36</span><span v-fit="54">14.08.2024</span></div></div>
      </div>
    </section>
  </div>
</template>

<style>
body { margin: 0; background: #282828; }
</style>

<style scoped>
.desktop { display: flex; width: 3840px; height: 1080px; overflow: hidden; font: 12px/1 "Open Sans", "Noto Sans", sans-serif; color: #222; white-space: nowrap; }
.desktop span { display: inline-block; }
.screen { width: 1920px; height: 1080px; display: flex; flex-direction: column; flex: none; }
em, b { font-style: normal; font-weight: inherit; }

.popup-title { height: 23px; display: flex; align-items: center; background: #d3e2fd; border-bottom: 1px solid #a9b0bc; padding-left: 6px; color: #222; flex: none; }
.popup-title .t { margin-left: 6px; font-size: 12px; line-height: 22px; }
.wctl { margin-left: auto; display: flex; gap: 36px; padding-right: 18px; color: #000; }
.wctl.dim { color: #777; margin-top: 0; padding-right: 17px; }
.popup-url { height: 32px; display: flex; align-items: center; background: #ebeef8; border-bottom: 1px solid #b5b8bf; padding-left: 5px; color: #444; flex: none; }
.popup-url .t { font-size: 13.500px; line-height: 20px; margin-left: 8px; }
.popup-url b, .omni b { color: #1a1a1a; }
.info { width: 24px; height: 24px; border-radius: 12px; background: #fff; display: flex !important; align-items: center; justify-content: center; flex: none; }

.vnc { flex: 1; position: relative; background: #282828; border-top: 1px solid #1f1f22; box-sizing: border-box; display: flex; align-items: center; justify-content: center; }
.vm { width: 1024px; height: 768px; background: #000; display: flex; flex-direction: column; align-items: center; }
.spin { margin-top: 332px; align-self: flex-start; margin-left: 480px; flex: none; }
.wait { color: #fff; font-size: 22px; font-weight: 300; line-height: 30px; margin-top: 12px; }
.bar { position: absolute; left: 0; top: 375px; width: 55px; height: 234px; background: #474747; border-radius: 0 10px 10px 0; box-shadow: 6px 6px 0 rgba(0, 0, 0, .4); display: flex; flex-direction: column; align-items: center; box-sizing: border-box; padding-top: 8px; }
.logo { display: flex; flex-direction: column; width: 35px; height: 29px; font-weight: 700; text-shadow: 1px 1px 0 #111; }
.logo .no { color: #0a7a0a; font-size: 12px; line-height: 13px; }
.logo .vn { color: #e2de0a; font-size: 14px; line-height: 15px; align-self: flex-start; }
.bar hr { width: 35px; margin: 5px 0 10px; border: 0; border-top: 1px solid #6c6c6c; }
.btn { width: 33px; height: 33px; border: 1px solid #5e5e5e; border-radius: 6px; display: flex; align-items: center; justify-content: center; color: #dcdcdc; margin-bottom: 10px; flex: none; }
.handle { position: absolute; left: 55px; top: 410px; width: 15px; height: 50px; background: #434343; border-radius: 0 6px 6px 0; box-shadow: 2px 2px 0 rgba(0, 0, 0, .35); display: flex; align-items: center; }
.handle i { margin-left: 6px; border: 3px solid transparent; border-right: 5px solid #ddd; border-left: 0; }

.taskbar { height: 40px; background: #eee; display: flex; flex: none; }
.cell { width: 49px; display: flex; align-items: center; justify-content: center; box-sizing: border-box; }
.cell.run { background: linear-gradient(#0078d7, #0078d7) 50% 100% / 41px 2px no-repeat; }
.cell.on { background: linear-gradient(#0078d7, #0078d7) 50% 100% / 100% 2px no-repeat, #fafafa; box-shadow: inset -1px 0 #ddd; }
.tray { margin-left: auto; display: flex; align-items: center; gap: 7px; padding-right: 14px; border-right: 1px solid #c8c8c8; margin-right: 3px; color: #000; }
.tray.second { border: 0; padding-right: 2px; margin-right: 3px; }
.clock { display: flex; flex-direction: column; align-items: center; font-size: 11.500px; line-height: 18px; width: 58px; margin: 0 7px 0 0; }
.second .clock { margin: 0; }

.tabstrip { height: 40px; background: #dee1e9; display: flex; align-items: center; flex: none; }
.tabsearch { width: 28px; height: 28px; border-radius: 9px; background: #fff; margin: 0 3px 0 6px; display: flex !important; align-items: center; justify-content: center; }
.tab { width: 238px; height: 34px; margin-top: 6px; display: flex; align-items: center; padding: 0 0 6px 11px; box-sizing: border-box; position: relative; font-size: 11.700px; color: #444; flex: none; }
.tab.active { color: #222; background: linear-gradient(#fff, #fff) 4px 0 / 231px 100% no-repeat; clip-path: inset(0 3px 0 4px round 10px 10px 0 0); }
.tab .tt { margin-left: 8px; overflow: hidden; line-height: 18px; mask-image: linear-gradient(90deg, #000 90%, transparent); }
.tab .x { position: absolute; right: 15px; top: 9px; }
.tab .aud { margin-left: 5px; }
.tab.sep::after { content: ""; position: absolute; right: 0; top: 6px; width: 2px; height: 16px; background: #c1c4ca; }
.new { margin-left: 11px; }
.toolbar { height: 46px; background: #fff; border-radius: 8px 8px 0 0; display: flex; align-items: center; flex: none; box-shadow: -8px -8px 0 #dee1e9, 8px -8px 0 #dee1e9; clip-path: inset(0); }
.navs { display: flex; gap: 20px; padding-left: 14px; width: 142px; color: #444; }
.navs .off { color: #aaa; }
.omni { width: 1410px; height: 34px; border-radius: 17px; background: #ebeef8; display: flex; align-items: center; padding: 0 16px 0 5px; box-sizing: border-box; color: #444; font-size: 13.500px; }
.omni .t { margin-left: 8px; line-height: 20px; }
.omni .key { margin-left: auto; margin-right: 15px; }
.exts { display: flex; align-items: center; padding: 0 20px 0 18px; flex: 1; justify-content: space-between; }
.exts i { width: 2px; height: 16px; background: #d3e2fd; }
.exts .gh { margin-top: 4px; }
.av { width: 20px; height: 20px; border-radius: 10px; background: #c23a13; color: #fff; text-align: center; line-height: 20px; font-size: 11px; }
.bookmarks { height: 34px; display: flex; align-items: center; background: #fff; padding-left: 14px; border-bottom: 1px solid #dcdcdc; box-sizing: border-box; padding-bottom: 5px; flex: none; color: #444; font-size: 11.700px; }
.bm { display: flex; align-items: center; gap: 7px; flex: none; line-height: 18px; }
.more { font-size: 17px; width: 14px; line-height: 20px; margin-top: -2px; }
.bsep { width: 2px; height: 16px; background: #d3e2fd; margin: 0 16px 0 15px; }

.pve { height: 920px; background: #cfcfcf; display: flex; flex-direction: column; font: 13px/15px "Liberation Sans", Arial, sans-serif; color: #000; }
.ph { height: 35px; display: flex; align-items: center; padding: 0 6px 0 6px; flex: none; }
.word { font: 700 21px/24px "DejaVu Sans", sans-serif; color: #000; margin-left: 5px; -webkit-text-stroke: .6px; }
.word em { color: #e57000; }
.ver { font-size: 14px; margin-left: 3px; color: #222; }
.find { width: 162px; height: 22px; line-height: 22px; padding-left: 6px; margin-left: 6px; background: #fff; color: #777; }
.pbtns { margin-left: auto; display: flex; gap: 6px; align-items: center; }
.pb { display: flex !important; align-items: center; gap: 6px; height: 24px; box-sizing: border-box; padding-left: 5px; background: #f5f5f5; border-radius: 3px; font-size: 12px; }
.pb.blue { background: #3892d4; border: 1px solid #2477b5; color: #fff; text-shadow: 0 0 .6px #fff; padding-left: 3px; }
.pb.dark { background: #464d4d; color: #fff; margin-left: 2px; gap: 5px; }
.c { margin-left: auto; margin-right: 8px; color: #999; }

.work { height: 838px; display: flex; padding: 0 5px 0 6px; flex: none; }
.west { width: 298px; display: flex; flex-direction: column; margin-right: 6px; }
.viewrow { display: flex; justify-content: space-between; height: 22px; margin: 1px 0 7px; }
.combo { width: 269px; box-sizing: border-box; background: #fff; display: flex; align-items: center; justify-content: space-between; padding: 0 5px 0 6px; color: #222; }
.combo svg, .combo2 svg { color: #999; }
.gearb { width: 22px; height: 22px; background: #f5f5f5; border-radius: 2px; display: flex !important; align-items: center; justify-content: center; color: #555; }
.tree { flex: 1; background: #fff; }
.row { height: 22px; display: flex; align-items: center; box-sizing: border-box; }
.row.sel { background: #c2ddf2; }
.tw { color: #aaa; margin-right: 2.500px; margin-top: 2px; }
.ib { flex: none; margin-top: 1px; }

.center { width: 1605px; display: flex; flex-direction: column; background: #fff; }
.vmhead { height: 36px; border-bottom: 1px solid #cfcfcf; display: flex; align-items: center; padding-left: 8px; color: #222; flex: none; }
.tags { color: #888; margin: 0 4px 0 25px; }
.acts { margin-left: auto; margin-right: 9px; display: flex; font-size: 12px; gap: 9px; margin-bottom: 2px; }
.ab { height: 24px; box-sizing: border-box; border: 1px solid #d5d5d5; background: #f5f5f5; border-radius: 3px; display: flex !important; align-items: center; gap: 6px; padding-left: 9px; }
.ab.off { opacity: .5; color: #555; }
.ab i { height: 22px; width: 1px; background: #dcdcdc; margin-left: auto; }
.ab i + .c { margin: 0 7px 0 1px; }
.body { flex: 1; display: flex; min-height: 0; }
.side { width: 137px; background: #f5f5f5; border-right: 1px solid #cfcfcf; padding-top: 5px; box-sizing: content-box; flex: none; }
.ni { height: 24px; margin-bottom: 5px; display: flex; align-items: center; padding-left: 8px; gap: 9px; width: 128px; }
.ni span { color: #333; margin-top: -1px; }
.ni.sel { background: #c2ddf2; }
.ni i { border: 5px solid transparent; border-left: 6px solid #ccc; border-right: 0; margin-left: 29px; }
.panel { flex: 1; display: flex; flex-direction: column; min-width: 0; }
.range { height: 36px; border-bottom: 1px solid #cfcfcf; display: flex; justify-content: flex-end; align-items: center; padding-right: 8px; flex: none; }
.combo2 { width: 170px; height: 24px; box-sizing: border-box; border: 1px solid #cfcfcf; display: flex; align-items: center; justify-content: space-between; padding: 0 6px; }
.scroll { flex: 1; display: flex; overflow: hidden; min-height: 0; }
.cards { width: 1450px; display: flex; flex-wrap: wrap; align-content: flex-start; padding: 10px 10px 0; gap: 10px; box-sizing: border-box; }
.pair { width: 710px; height: 320px; display: flex; justify-content: space-between; }
.card { width: 710px; height: 320px; display: flex; flex-direction: column; overflow: hidden; flex: none; }
.card.status { width: 668px; }
.ch { height: 34px; background: #f5f5f5; display: flex; align-items: center; padding: 0 9px 0 10px; flex: none; }
.status .ch { height: 36px; }
.ct { color: #157fcc; font-size: 14.500px; }
.cb { flex: 1; border: 1px solid #cfcfcf; overflow: hidden; box-sizing: border-box; }
.chart { display: block; }
.lab { font-size: 13px; fill: #222; }
.ax { font-size: 16px; }
.legend { margin-left: auto; margin-right: 6px; height: 24px; box-sizing: border-box; border: 1px solid #cfcfcf; border-radius: 3px; background: #fff; display: flex; color: #333; }
.legend > span { display: flex; align-items: center; padding: 0 10.500px 0 7px; font-size: 13px; }
.legend > span + span { border-left: 1px solid #cfcfcf; }
.legend i { width: 10px; height: 10px; border-radius: 5px; margin-right: 7px; margin-top: 2px; }
.legend em { display: inline-block; }
.status .cb { padding: 19px 25px 0; }
.sr { height: 23px; display: flex; align-items: center; font-size: 13px; }
.sr svg { margin-left: 2px; }
.sr span { margin-left: 6px; }
.sr b { margin-left: auto; }
.sr:first-child span { margin-left: 7px; }
.sr.wide { height: 21px; }
.sr.wide + .meter { margin-bottom: 2px; }
.sr.wide svg { margin-left: 2.500px; }
.sr.wide span { margin-left: 5px; }
.sr.gap { margin-top: 16px; }
.sr.ips svg { margin-left: 0; }
.sr.ips span { margin-left: 4px; }
.meter { height: 5px; background: #f5f5f5; }
.meter i { display: block; height: 5px; background: #c2ddf2; }
.notes { width: 37px; background: #f5f5f5; display: flex; flex-direction: column; align-items: center; justify-content: space-between; padding: 10px 0 9px; box-sizing: border-box; color: #157fcc; }
.notes span { writing-mode: vertical-rl; font-size: 15px; letter-spacing: .3px; }
.sbar { width: 17px; background: #f1f1f1; display: flex; flex-direction: column; align-items: center; }
.sbar .up { border: 4px solid transparent; border-top: 0; border-bottom: 5px solid #888; margin: 7px 0 5px; }
.sbar .thumb { width: 13px; height: 558px; background: #c1c1c1; }
.sbar .dn { border: 4px solid transparent; border-bottom: 0; border-top: 5px solid #444; margin-top: auto; margin-bottom: 6px; }
.split { height: 5px; display: flex; padding-left: 936px; }
.split i { width: 48px; background: #ddd; }
.logs { height: 37px; background: #f5f5f5; margin: 0 5px 5px 6px; display: flex; align-items: center; justify-content: space-between; padding: 0 9px 0 10px; color: #157fcc; font-size: 14.500px; }
</style>
